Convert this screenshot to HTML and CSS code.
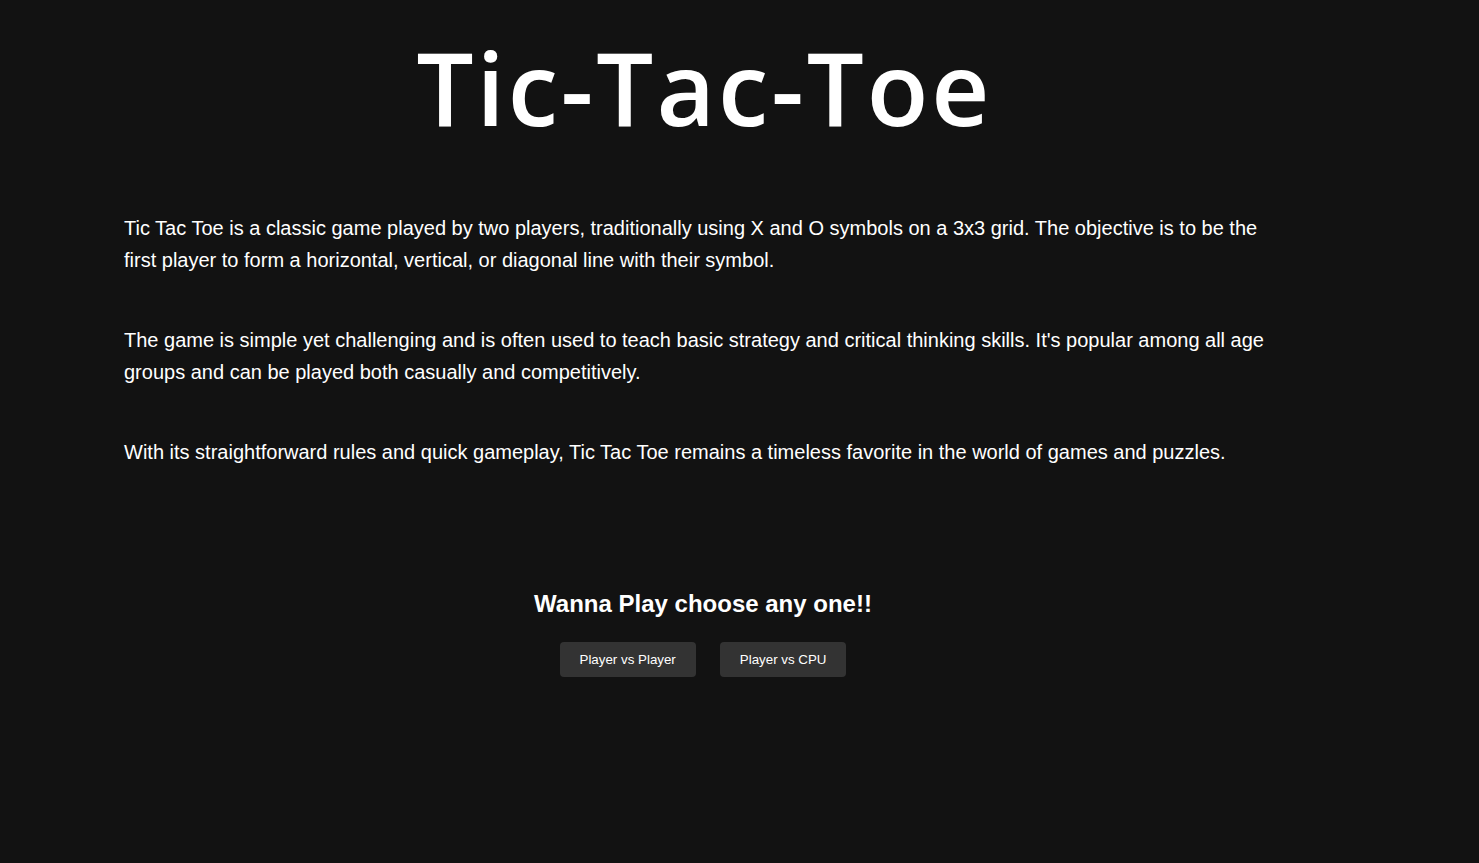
FILE: index.html
```html
<!DOCTYPE html>
<html lang="en">
<head>
<meta charset="utf-8">
<title>Tic-Tac-Toe</title>
<link rel="stylesheet" href="styles.css">
</head>
<body>
<main class="page">
  <h1 class="title">Tic-Tac-Toe</h1>
  <section class="about">
    <p>Tic Tac Toe is a classic game played by two players, traditionally using X and O symbols on a 3x3 grid. The objective is to be the first player to form a horizontal, vertical, or diagonal line with their symbol.</p>
    <p>The game is simple yet challenging and is often used to teach basic strategy and critical thinking skills. It's popular among all age groups and can be played both casually and competitively.</p>
    <p>With its straightforward rules and quick gameplay, Tic Tac Toe remains a timeless favorite in the world of games and puzzles.</p>
  </section>
  <section class="play">
    <h2 class="play-title">Wanna Play choose any one!!</h2>
    <div class="choices">
      <button class="btn" type="button">Player vs Player</button>
      <button class="btn" type="button">Player vs CPU</button>
    </div>
  </section>
</main>
</body>
</html>
```
FILE: styles.css
```css
html, body {
  margin: 0;
  padding: 0;
  background: #121212;
  color: #ffffff;
}
body {
  font-family: "Liberation Sans", Arial, sans-serif;
  min-height: 863px;
}
.page {
  width: 1158px;
  margin-left: 124px;
  padding-top: 27px;
}
.title {
  margin: 0;
  padding-left: 3px;
  text-align: center;
  font-family: "Open Sans", sans-serif;
  font-weight: 600;
  font-size: 101px;
  line-height: 121px;
  letter-spacing: 3px;
}
.about {
  margin-top: 64px;
}
.about p {
  margin: 0 0 48px 0;
  font-size: 20px;
  line-height: 32px;
}
.about p:last-child {
  margin-bottom: 0;
}
.play {
  margin-top: 122px;
  display: flex;
  flex-direction: column;
  align-items: center;
}
.play-title {
  margin: 0;
  font-size: 24px;
  line-height: 28px;
  font-weight: 700;
}
.choices {
  margin-top: 24px;
  display: flex;
  gap: 24px;
}
.btn {
  font-family: "Liberation Sans", Arial, sans-serif;
  font-size: 13.333px;
  line-height: 15px;
  color: #ffffff;
  background: #333333;
  border: none;
  border-radius: 4px;
  padding: 10px 20px;
  cursor: pointer;
}
```
